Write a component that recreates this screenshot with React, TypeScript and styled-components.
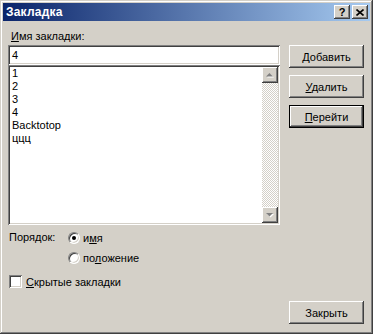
import { FC, ReactNode } from 'react';
import styled, { createGlobalStyle, css } from 'styled-components';

const GlobalStyle = createGlobalStyle`
  html, body {
    margin: 0;
    padding: 0;
    background: #d4d0c8;
  }
  body {
    font-family: 'Liberation Sans', Arial, sans-serif;
    font-size: 11px;
    color: #000;
  }
`;

const raised = css`
  box-shadow: inset -1px -1px #404040, inset 1px 1px #ffffff, inset -2px -2px #808080,
    inset 2px 2px #d4d0c8;
`;

const sunken = css`
  box-shadow: inset 1px 1px #808080, inset -1px -1px #ffffff, inset 2px 2px #404040,
    inset -2px -2px #d4d0c8;
`;

const Window = styled.div`
  width: 373px;
  height: 334px;
  box-sizing: border-box;
  padding: 3px;
  background: #d4d0c8;
  display: flex;
  flex-direction: column;
  box-shadow: inset -1px -1px #404040, inset 1px 1px #d4d0c8, inset -2px -2px #808080,
    inset 2px 2px #ffffff;
`;

const TitleBar = styled.div`
  height: 18px;
  flex: none;
  display: flex;
  align-items: center;
  padding: 0 2px 0 3px;
  background: linear-gradient(to right, #0a246a, #a6caf0);
`;

const Title = styled.span`
  flex: 1;
  color: #fff;
  font-weight: bold;
  font-size: 12px;
  letter-spacing: 0.2px;
`;

const CaptionButton = styled.div`
  width: 16px;
  height: 14px;
  background: #d4d0c8;
  ${raised};
  display: flex;
  align-items: center;
  justify-content: center;
  font-weight: bold;
  font-size: 11px;
  line-height: 14px;
  & + & {
    margin-left: 2px;
  }
`;

const Body = styled.div`
  flex: 1;
  display: grid;
  grid-template-columns: 272px 75px;
  column-gap: 9px;
  padding: 0 6px 7px 5px;
`;

const LeftColumn = styled.div`
  display: flex;
  flex-direction: column;
`;

const RightColumn = styled.div`
  display: flex;
  flex-direction: column;
  padding-top: 24px;
  gap: 7px;
`;

const Label = styled.div`
  margin-top: 9px;
  height: 13px;
  line-height: 13px;
  padding-left: 3px;
`;

const Field = styled.div`
  margin-top: 2px;
  height: 20px;
  box-sizing: border-box;
  padding: 2px 4px;
  line-height: 16px;
  background: #fff;
  ${sunken};
`;

const ListBox = styled.div`
  height: 160px;
  box-sizing: border-box;
  padding: 2px;
  background: #fff;
  display: flex;
  ${sunken};
`;

const Items = styled.div`
  flex: 1;
  padding-left: 2px;
`;

const Item = styled.div`
  height: 13px;
  line-height: 13px;
`;

const ScrollBar = styled.div`
  width: 16px;
  display: flex;
  flex-direction: column;
  background-color: #fff;
  background-image: conic-gradient(#d4d0c8 25%, #fff 0 50%, #d4d0c8 0 75%, #fff 0);
  background-size: 2px 2px;
`;

const ScrollArrow = styled.div<{ $down?: boolean }>`
  width: 16px;
  height: 16px;
  flex: none;
  background: #d4d0c8;
  ${raised};
  display: flex;
  align-items: center;
  justify-content: center;
  margin-top: ${({ $down }) => ($down ? 'auto' : '0')};
`;

const OrderRow = styled.div`
  display: grid;
  grid-template-columns: 60px 1fr;
  margin-top: 6px;
  row-gap: 7px;
`;

const OrderLabel = styled.div`
  padding-left: 1px;
  line-height: 13px;
`;

const Option = styled.div`
  display: flex;
  align-items: center;
  height: 13px;
  gap: 3px;
  grid-column: 2;
`;

const Radio = styled.div<{ $checked?: boolean }>`
  width: 12px;
  height: 12px;
  box-sizing: border-box;
  border-radius: 50%;
  background: #fff;
  border: 1px solid;
  border-color: #808080 #ffffff #ffffff #808080;
  box-shadow: inset 1px 1px #404040, inset -1px -1px #d4d0c8;
  display: flex;
  align-items: center;
  justify-content: center;
  &::after {
    content: '';
    display: ${({ $checked }) => ($checked ? 'block' : 'none')};
    width: 4px;
    height: 4px;
    border-radius: 50%;
    background: #000;
  }
`;

const CheckRow = styled.div`
  margin-top: 11px;
  display: flex;
  align-items: center;
  gap: 4px;
  height: 13px;
  padding-left: 1px;
`;

const CheckBox = styled.div`
  width: 13px;
  height: 13px;
  background: #fff;
  ${sunken};
`;

const Button = styled.div<{ $default?: boolean }>`
  height: 23px;
  box-sizing: border-box;
  display: flex;
  align-items: center;
  justify-content: center;
  background: #d4d0c8;
  ${({ $default }) =>
    $default
      ? css`
          box-shadow: inset 0 0 0 1px #000, inset -2px -2px #404040, inset 2px 2px #ffffff,
            inset -3px -3px #808080;
        `
      : raised};
`;

const CloseButton = styled(Button)`
  margin-top: auto;
`;

const Arrow: FC<{ down?: boolean }> = ({ down }) => (
  <svg width="8" height="5" viewBox="0 0 8 5" style={{ overflow: 'visible' }}>
    {down ? (
      <>
        <path d="M1 1h7L4.5 4.5z" fill="#fff" />
        <path d="M0 0h7L3.5 3.5z" fill="#808080" />
      </>
    ) : (
      <>
        <path d="M4.5 1L8 4.5H1z" fill="#fff" />
        <path d="M3.5 0L7 3.5H0z" fill="#808080" />
      </>
    )}
  </svg>
);

const Key: FC<{ children: ReactNode }> = ({ children }) => <u>{children}</u>;

const bookmarks = ['1', '2', '3', '4', 'Backtotop', 'ццц'];

const App: FC = () => (
  <Window>
    <GlobalStyle />
    <TitleBar>
      <Title>Закладка</Title>
      <CaptionButton>?</CaptionButton>
      <CaptionButton>
        <svg width="8" height="7" viewBox="0 0 8 7">
          <path d="M0.5 0.5L7.5 6.5M7.5 0.5L0.5 6.5" stroke="#000" strokeWidth="1.6" />
        </svg>
      </CaptionButton>
    </TitleBar>
    <Body>
      <LeftColumn>
        <Label>
          <Key>И</Key>мя закладки:
        </Label>
        <Field>4</Field>
        <ListBox>
          <Items>
            {bookmarks.map((b) => (
              <Item key={b}>{b}</Item>
            ))}
          </Items>
          <ScrollBar>
            <ScrollArrow>
              <Arrow />
            </ScrollArrow>
            <ScrollArrow $down>
              <Arrow down />
            </ScrollArrow>
          </ScrollBar>
        </ListBox>
        <OrderRow>
          <OrderLabel>Порядок:</OrderLabel>
          <Option style={{ gridRow: 1 }}>
            <Radio $checked />
            <span>
              и<Key>м</Key>я
            </span>
          </Option>
          <Option>
            <Radio />
            <span>
              по<Key>л</Key>ожение
            </span>
          </Option>
        </OrderRow>
        <CheckRow>
          <CheckBox />
          <span>
            <Key>С</Key>крытые закладки
          </span>
        </CheckRow>
      </LeftColumn>
      <RightColumn>
        <Button>
          <span>
            <Key>Д</Key>обавить
          </span>
        </Button>
        <Button>
          <span>
            <Key>У</Key>далить
          </span>
        </Button>
        <Button $default>
          <span>
            <Key>П</Key>ерейти
          </span>
        </Button>
        <CloseButton>Закрыть</CloseButton>
      </RightColumn>
    </Body>
  </Window>
);

export default App;
